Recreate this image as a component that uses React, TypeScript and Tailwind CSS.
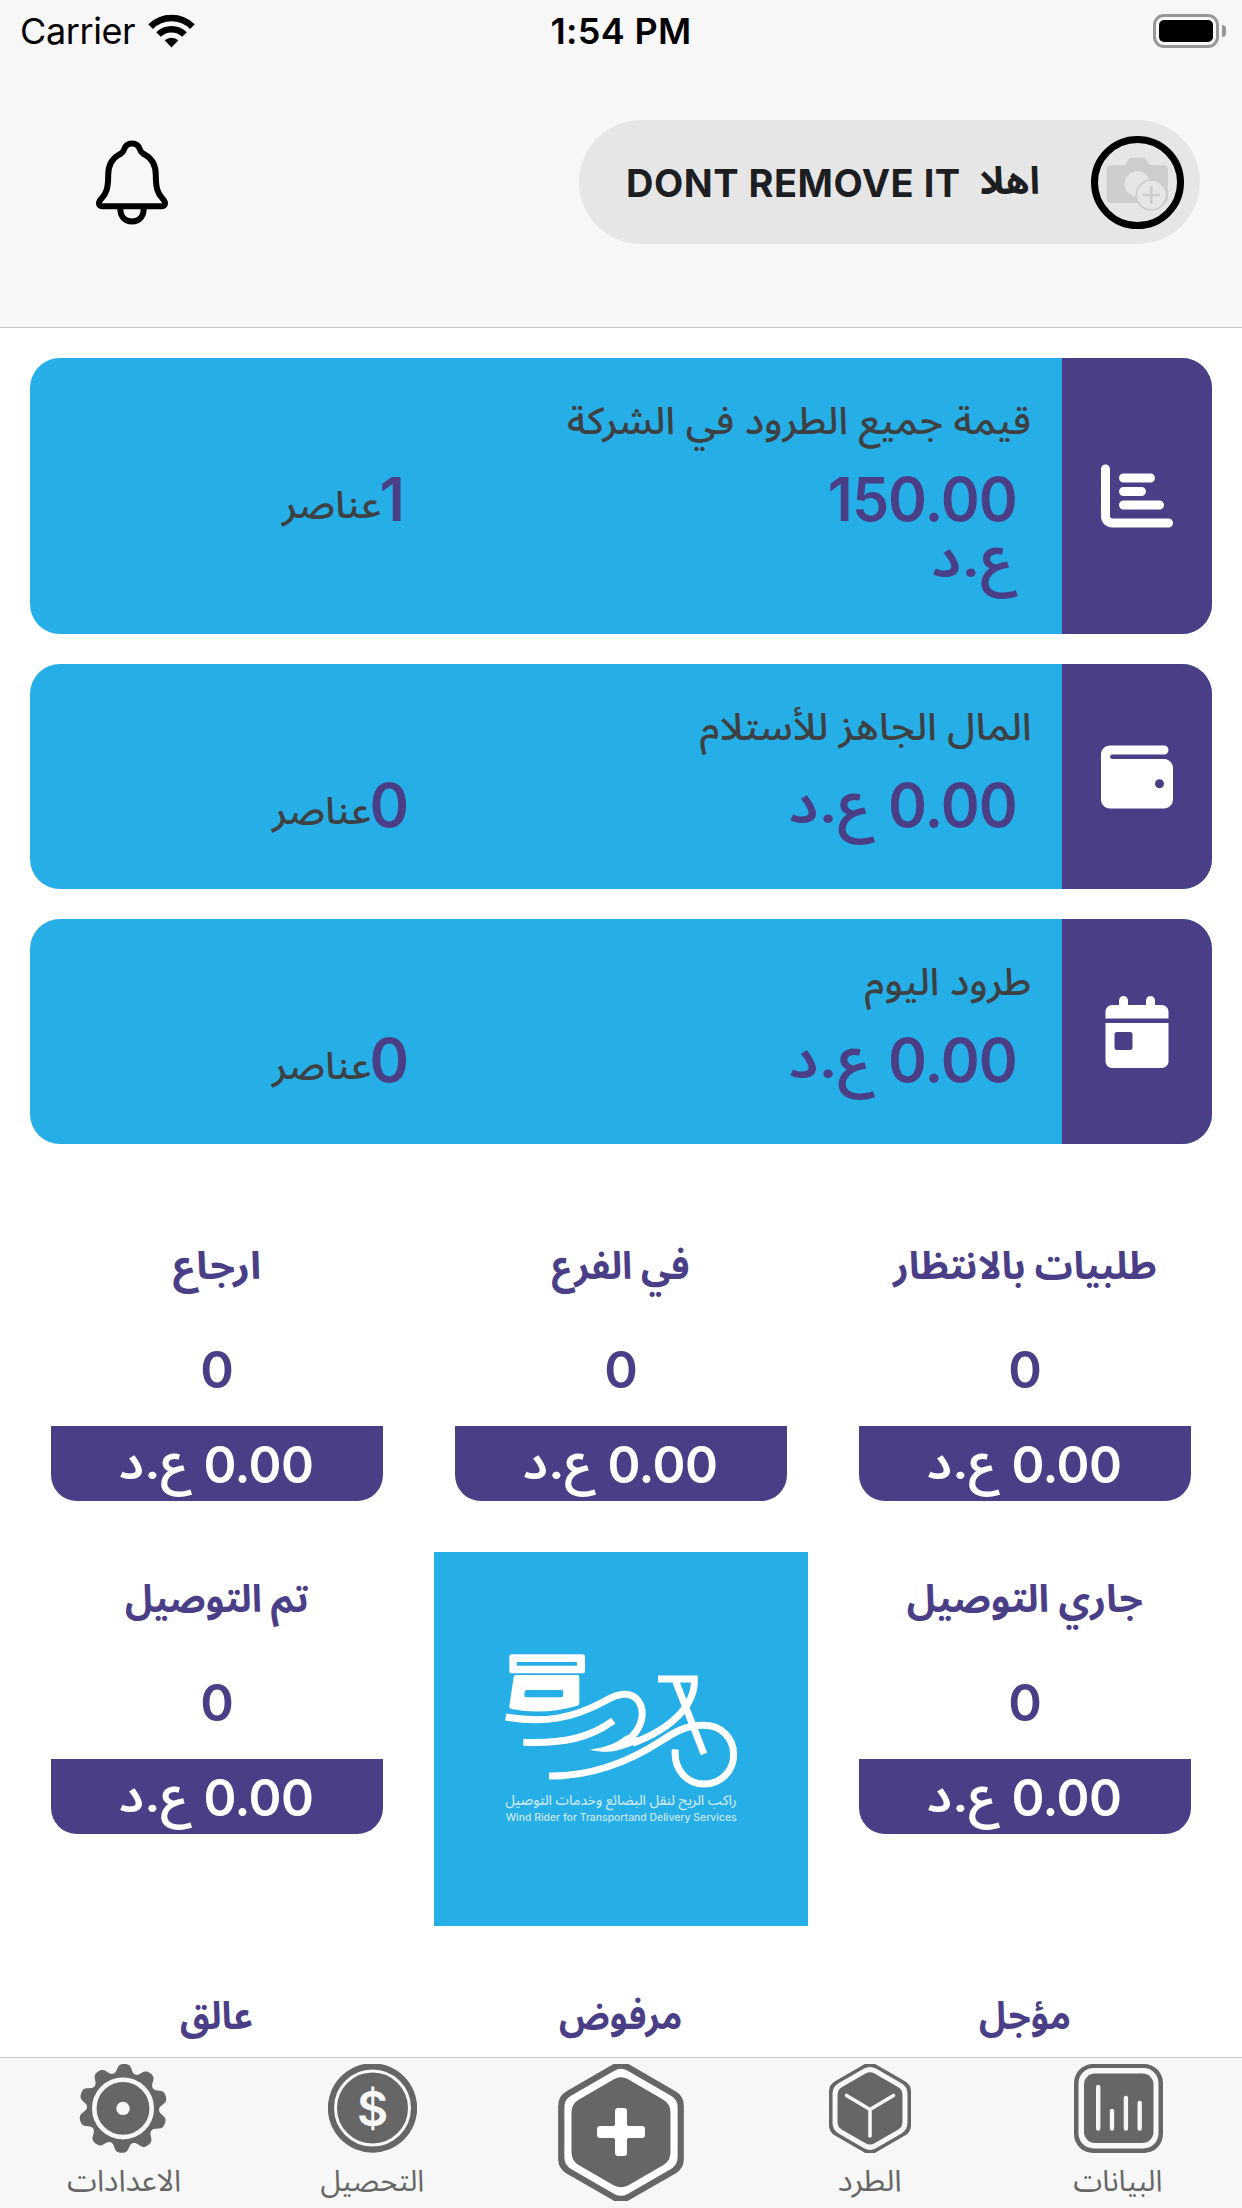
import type { ReactNode } from 'react';
import { FaCalendarDay, FaChartBar, FaWallet } from 'react-icons/fa6';

const HALF_SQRT3 = Math.sqrt(3) / 2;

function hexPoints(cx: number, cy: number, r: number) {
  return [
    [0, -1],
    [HALF_SQRT3, -0.5],
    [HALF_SQRT3, 0.5],
    [0, 1],
    [-HALF_SQRT3, 0.5],
    [-HALF_SQRT3, -0.5],
  ]
    .map(([x, y]) => `${(cx + x * r).toFixed(2)},${(cy + y * r).toFixed(2)}`)
    .join(' ');
}

function Hex({ cx, cy, r, round, color }: { cx: number; cy: number; r: number; round: number; color: string }) {
  return (
    <polygon points={hexPoints(cx, cy, r)} fill={color} stroke={color} strokeWidth={round * 2} strokeLinejoin="round" />
  );
}

function WifiIcon() {
  return (
    <svg className="ml-[13px] h-[34px] w-[47px]" viewBox="148.5 12.5 47 34" fill="none" stroke="#000" strokeWidth="6.6">
      <path d="M151.1 25.2A29.6 29.6 0 0 1 192.9 25.2" />
      <path d="M159 33A18.6 18.6 0 0 1 185 33" />
      <path d="M172 46l-6.8-7.2a10 10 0 0 1 13.6 0z" fill="#000" stroke="none" />
    </svg>
  );
}

function BatteryIcon() {
  return (
    <div className="flex items-center gap-[3px]">
      <div className="h-[34px] w-[66px] rounded-[11px] border-[3px] border-[#979797] p-[3px]">
        <div className="h-full w-full rounded-[5px] bg-black" />
      </div>
      <div className="h-[12px] w-[4px] rounded-r-full bg-[#979797]" />
    </div>
  );
}

function BellIcon() {
  return (
    <svg className="mt-[1px] h-[86px] w-[74px]" viewBox="95 140 74 86" fill="none" stroke="#000" strokeWidth="6" strokeLinejoin="round">
      <path d="M132 143.5C136 143.5 139 146 140.2 150C141.2 153.4 142.5 153.2 145.5 155C152.500 159 155.800 166.500 155.800 175C155.800 188 157.500 193 162.500 198.500C166.500 203 165.500 206.200 161 206.200H103C98.500 206.200 97.500 203 101.500 198.500C106.500 193 108.200 188 108.200 175C108.200 166.500 111.500 159 118.500 155C121.500 153.200 122.800 153.400 123.800 150C125 146 128 143.500 132 143.500Z" />
      <path d="M120.200 208C120.200 216 124.500 221.500 132 221.500S143.800 216 143.800 208" />
    </svg>
  );
}

function CameraIcon() {
  return (
    <svg className="h-[79px] w-[79px]" viewBox="54 68 237 237">
      <path d="M94 135H128Q138 134 142 124Q147 112 156 112H188Q197 112 202 124Q206 134 216 135H250Q264 135 264 149V234Q264 248 250 248H94Q80 248 80 234V149Q80 135 94 135Z" fill="#cdcdcd" />
      <circle cx="172" cy="191" r="38" fill="#e6e6e6" />
      <circle cx="214" cy="224" r="45" fill="#e6e6e6" stroke="#cdcdcd" strokeWidth="5" />
      <path d="M214 198V250M188 224H240" stroke="#cdcdcd" strokeWidth="8" />
    </svg>
  );
}

function GearIcon() {
  const pts: string[] = [];
  for (let i = 0; i < 360; i++) {
    const a = (i / 360) * Math.PI * 2;
    const r = 39.8 + 4.7 * (Math.tanh(1.3 * Math.cos(10 * (a - 0.035)) + 0.35) / 0.93);
    pts.push(`${(44 + r * Math.sin(a)).toFixed(2)},${(44.4 - r * Math.cos(a)).toFixed(2)}`);
  }
  return (
    <svg className="h-[89px] w-[90px]" viewBox="0 0 90 89">
      <polygon points={pts.join(' ')} fill="#666" />
      <circle cx="44" cy="44.400" r="28.700" fill="none" stroke="#f7f7f7" strokeWidth="4.600" />
      <circle cx="44" cy="44.400" r="6.700" fill="#f7f7f7" />
    </svg>
  );
}

function CoinIcon() {
  return (
    <svg className="h-[89px] w-[89px]" viewBox="0 0 89 89">
      <circle cx="44.500" cy="44" r="44.700" fill="#666" />
      <circle cx="44.500" cy="44" r="37" fill="none" stroke="#f7f7f7" strokeWidth="3" />
      <text x="44.500" y="61.500" textAnchor="middle" fontSize="48" fontWeight="600" fill="#f7f7f7">
        $
      </text>
    </svg>
  );
}

function AddIcon() {
  return (
    <svg className="h-[137px] w-[126px]" viewBox="54 42 378 411">
      <Hex cx={243} cy={247} r={160} round={50} color="#666" />
      <Hex cx={243} cy={247} r={150} round={40} color="#fff" />
      <Hex cx={243} cy={247} r={119.5} round={45} color="#666" />
      <rect x="171" y="228" width="144" height="36" rx="9" fill="#fff" />
      <rect x="225" y="174" width="36" height="144" rx="9" fill="#fff" />
      <rect x="221" y="224" width="44" height="44" rx="6" fill="#fff" />
    </svg>
  );
}

function CubeIcon() {
  return (
    <svg className="mr-[-2px] h-[89px] w-[90px]" viewBox="0 0 90 89">
      <Hex cx={45} cy={44.4} r={33.5} round={12} color="#666" />
      <Hex cx={45} cy={44.4} r={29.4} round={12} color="#f7f7f7" />
      <Hex cx={45} cy={44.4} r={27.1} round={9} color="#666" />
      <path d="M21.500 31.500L45 45.500L68.500 31.500M45 45.500V72" fill="none" stroke="#f7f7f7" strokeWidth="3.600" strokeLinecap="round" />
    </svg>
  );
}

function StatsIcon() {
  return (
    <svg className="mr-[-2px] h-[89px] w-[89px]" viewBox="0 0 89 89">
      <rect width="89" height="89" rx="19" fill="#666" />
      <rect x="4.500" y="4" width="80" height="80.500" rx="15" fill="#f7f7f7" />
      <rect x="10" y="9.500" width="69.500" height="69.500" rx="11" fill="#666" />
      <path d="M24.200 23V64.500M38 47V64.500M51.900 34V64.500M65.700 39V64.500" stroke="#f7f7f7" strokeWidth="4.400" strokeLinecap="round" />
    </svg>
  );
}

function RiderLogo() {
  return (
    <div className="mx-auto h-[374px] w-[374px] bg-[#26aee6]">
      <svg className="h-full w-full" viewBox="-138 -204 1122 1122">
        <path fill="#fff" fillRule="evenodd" d="M96 103H307Q315 103 315 111V152Q315 160 307 160H96Q88 160 88 152V111Q88 103 96 103ZM113 126Q110 126 110 129V134Q110 137 113 137H288Q291 137 291 134V129Q291 126 288 126Z" />
        <path fill="#fff" fillRule="evenodd" d="M108 165H292Q298 165 298 171V248Q298 256 290 258Q190 286 94 267Q88 266 88 259L101 171Q102 165 108 165ZM141 210Q135 210 134 216L133 226Q133 232 138 232H244Q249 232 249 227L250 216Q250 210 245 210Z" />
        <g fill="none" stroke="#fff" strokeWidth="21">
          <path d="M77 291C190 311 278 296 375 243C402 227 420 221 440 223C472 227 490 255 486 290C482 325 460 350 432 371" />
          <path d="M130 367C250 371 330 354 400 302" />
          <path d="M534 177H643C645 215 630 250 598 284C560 325 510 350 458 370" />
          <path d="M587 184L672 402" />
          <path d="M207 468C330 470 440 430 545 362C590 332 620 317 668 316C725 315 761 355 761 404C761 453 722 492 672 492C621 492 580 448 586 388" />
        </g>
        <path d="M328 389C375 384 405 372 440 346L470 352C530 340 470 380 400 394C375 398 350 393 328 389Z" fill="#fff" />
        <text x="770" y="556" direction="rtl" textAnchor="start" fontSize="42" fontWeight="500" fill="#fff" fillOpacity="0.75" textLength="694" lengthAdjust="spacingAndGlyphs">
          راكب الريح لنقل البضائع وخدمات التوصيل
        </text>
        <text x="77" y="603" direction="ltr" textAnchor="start" fontSize="30" fontWeight="500" fill="#fff" fillOpacity="0.75" textLength="693" lengthAdjust="spacingAndGlyphs">
          Wind Rider for Transportand Delivery Services
        </text>
      </svg>
    </div>
  );
}

function Currency() {
  return (
    <span className="inline-block origin-right translate-x-[-0.06em] translate-y-[-0.045em] scale-x-[1.02] scale-y-[0.92]">
      ع.د
    </span>
  );
}

type CardProps = {
  icon: ReactNode;
  title: string;
  titleFit: string;
  amount: ReactNode;
  count: string;
  countShift?: string;
  height: string;
};

function SummaryCard({ icon, title, titleFit, amount, count, countShift = '', height }: CardProps) {
  return (
    <section className={`flex overflow-hidden rounded-[30px] bg-[#26aee6] ${height}`}>
      <div className="flex w-[150px] shrink-0 items-center justify-center bg-[#4a3f87] text-[72px] text-white">{icon}</div>
      <div className="flex flex-1 flex-col pt-[37px]">
        <h2 className="mr-[31px] text-[38px] leading-[50px] font-medium text-[#3e4144]">
          <span className={`inline-block origin-right whitespace-nowrap ${titleFit}`}>{title}</span>
        </h2>
        <div className="mt-[24px] flex justify-between pr-[45px] text-[60px] leading-[60px] font-semibold text-[#4a3f87]">
          <div className="origin-right scale-x-[0.985] tracking-[-1px]">{amount}</div>
          <div className={`flex w-[622px] items-baseline justify-center whitespace-nowrap ${countShift}`}>
            <span className="tracking-[-1px]">{count}</span>
            <span className="text-[38px] font-medium text-[#3e4144]">
              <span className="inline-block translate-y-[-3px] scale-x-[1.04]">عناصر</span>
            </span>
          </div>
        </div>
      </div>
    </section>
  );
}

function StatTitle({ children, fit }: { children: string; fit: string }) {
  return (
    <h3 className="pt-[16px] text-center text-[38px] leading-[60px] font-bold whitespace-nowrap text-[#4a3f87]">
      <span className={`inline-block ${fit}`}>{children}</span>
    </h3>
  );
}

function StatCell({ title, fit }: { title: string; fit: string }) {
  return (
    <div className="mx-9">
      <StatTitle fit={fit}>{title}</StatTitle>
      <p className="mt-[45px] text-center text-[51px] leading-[60px] font-semibold text-[#4a3f87]">0</p>
      <p className="mt-[26px] h-[75px] rounded-b-[26px] bg-[#4a3f87] text-center text-[51px] leading-[78px] font-semibold text-white">
        <span className="inline-block translate-x-px scale-x-[0.98] tracking-[-0.5px]">
          0.00 <Currency />
        </span>
      </p>
    </div>
  );
}

function Tab({ icon, label, fit }: { icon: ReactNode; label?: string; fit?: string }) {
  return (
    <div className="flex flex-1 flex-col items-center pt-[6px]">
      {icon}
      {label && <span className={`mt-[7px] text-[30px] leading-[40px] whitespace-nowrap text-[#666] ${fit}`}>{label}</span>}
    </div>
  );
}

export default function App() {
  return (
    <div dir="rtl" className="flex h-[2208px] w-[1242px] flex-col overflow-hidden bg-white font-['Inter','Noto_Sans_Arabic','DejaVu_Sans',sans-serif]">
      <header className="h-[328px] shrink-0 border-b border-[#c4c4c4] bg-[#f7f7f7]">
        <div dir="ltr" className="grid h-[60px] grid-cols-3 items-center px-[18px] text-[36px] leading-[62px] text-black">
          <div className="ml-[2px] flex items-center">
            <span className="tracking-[-0.4px]">Carrier</span>
            <WifiIcon />
          </div>
          <div className="text-center font-semibold tracking-[0.3px]">1:54 PM</div>
          <div className="mr-[-2px] flex justify-end">
            <BatteryIcon />
          </div>
        </div>
        <div dir="ltr" className="mt-[60px] flex items-center justify-between pr-[42px] pl-[95px]">
          <BellIcon />
          <div className="flex h-[124px] w-[621px] items-center rounded-full bg-[#e6e6e6] pr-[16px] pl-[47px] text-[38px] leading-[50px] font-bold text-[#1c1e22]">
            <span className="mt-[2px] tracking-[0.5px] whitespace-nowrap">DONT REMOVE IT</span>
            <span className="mr-[51px] mb-[5px] ml-auto">اهلا</span>
            <div className="flex h-[93px] w-[93px] items-center justify-center rounded-full border-[7px] border-black">
              <CameraIcon />
            </div>
          </div>
        </div>
      </header>

      <main className="flex-1 overflow-hidden">
        <div className="flex flex-col gap-[30px] px-[30px] pt-[30px]">
          <SummaryCard
            icon={<FaChartBar />}
            title="قيمة جميع الطرود في الشركة"
            titleFit="scale-x-[1.045]"
            amount={
              <>
                150.00
                <br />
                <Currency />
              </>
            }
            count="1"
            countShift="translate-x-[3px]"
            height="h-[276px]"
          />
          <SummaryCard
            icon={<FaWallet />}
            title="المال الجاهز للأستلام"
            titleFit="scale-x-[1.045]"
            amount={
              <>
                0.00 <Currency />
              </>
            }
            count="0"
            height="h-[225px]"
          />
          <SummaryCard
            icon={<FaCalendarDay />}
            title="طرود اليوم"
            titleFit="scale-x-[1.04]"
            amount={
              <>
                0.00 <Currency />
              </>
            }
            count="0"
            height="h-[225px]"
          />
        </div>

        <div className="mt-[75px] grid grid-cols-3 grid-rows-[333px_417px_auto] px-[15px]">
          <StatCell title="طلبيات بالانتظار" fit="scale-x-[1]" />
          <StatCell title="في الفرع" fit="scale-x-[0.98]" />
          <StatCell title="ارجاع" fit="scale-x-[1.08]" />
          <StatCell title="جاري التوصيل" fit="scale-x-[1.02]" />
          <RiderLogo />
          <StatCell title="تم التوصيل" fit="scale-x-[0.98]" />
          <StatTitle fit="scale-x-[0.96]">مؤجل</StatTitle>
          <StatTitle fit="scale-x-[0.94]">مرفوض</StatTitle>
          <StatTitle fit="scale-x-[0.95]">عالق</StatTitle>
        </div>
      </main>

      <nav className="flex h-[151px] shrink-0 border-t border-[#c4c4c4] bg-[#f7f7f7]">
        <Tab icon={<StatsIcon />} label="البيانات" fit="scale-x-[0.97]" />
        <Tab icon={<CubeIcon />} label="الطرد" fit="scale-x-[1.04]" />
        <Tab icon={<AddIcon />} />
        <Tab icon={<CoinIcon />} label="التحصيل" fit="scale-x-[0.97]" />
        <Tab icon={<GearIcon />} label="الاعدادات" fit="scale-x-[1]" />
      </nav>
    </div>
  );
}
